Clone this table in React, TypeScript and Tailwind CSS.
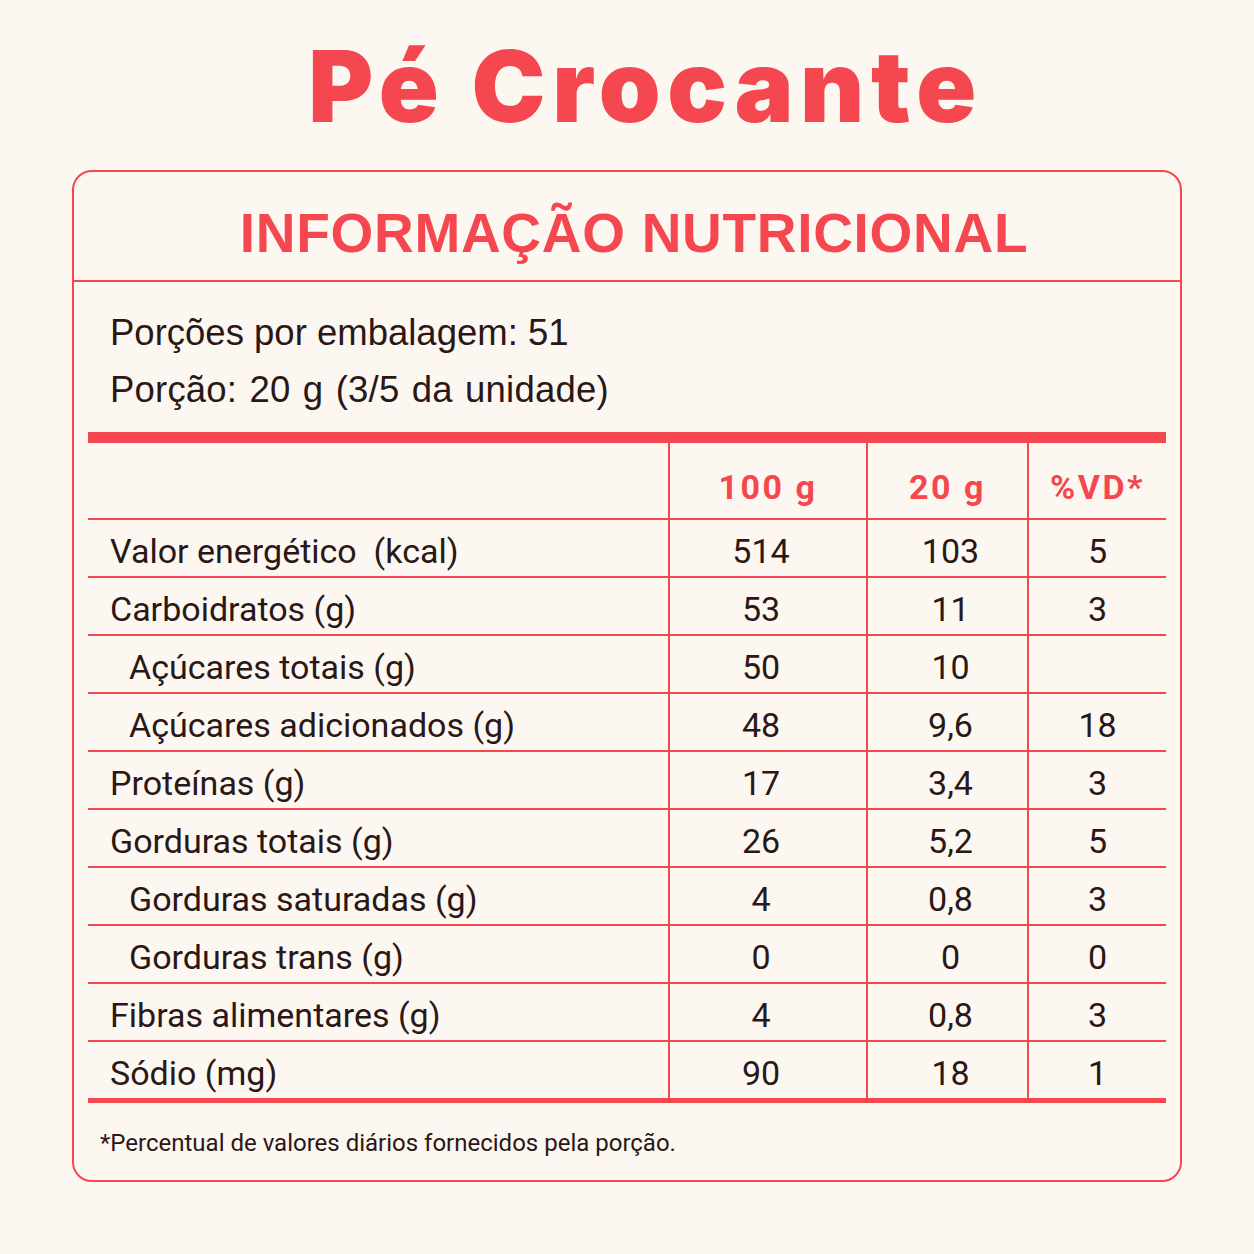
import React from "react";

type Row = { label: string; indent?: boolean; a: string; b: string; c: string };

const rows: Row[] = [
  { label: "Valor energético\u00a0 (kcal)", a: "514", b: "103", c: "5" },
  { label: "Carboidratos (g)", a: "53", b: "11", c: "3" },
  { label: "Açúcares totais (g)", indent: true, a: "50", b: "10", c: "" },
  { label: "Açúcares adicionados (g)", indent: true, a: "48", b: "9,6", c: "18" },
  { label: "Proteínas (g)", a: "17", b: "3,4", c: "3" },
  { label: "Gorduras totais (g)", a: "26", b: "5,2", c: "5" },
  { label: "Gorduras saturadas (g)", indent: true, a: "4", b: "0,8", c: "3" },
  { label: "Gorduras trans (g)", indent: true, a: "0", b: "0", c: "0" },
  { label: "Fibras alimentares (g)", a: "4", b: "0,8", c: "3" },
  { label: "Sódio (mg)", a: "90", b: "18", c: "1" },
];

export default function App() {
  return (
    <div
      className="w-[1254px] h-[1254px] bg-[#fcf8f1] text-[#2a1716] flex flex-col items-center"
      style={{ fontFamily: "Roboto, 'Liberation Sans', sans-serif" }}
    >
      <h1
        className="mt-[30px] ml-[37px] h-[140px] text-[99px] leading-[100px] font-black text-[#f4474f] tracking-[6.6px] pt-[6px]"
        style={{ fontFamily: "Inter, 'Liberation Sans', sans-serif" }}
      >
        Pé Crocante
      </h1>
      <div className="w-[1110px] h-[1012px] border-2 border-[#f4474f] rounded-[20px] flex flex-col">
        <div className="h-[110px] border-b-2 border-[#f4474f] flex items-center justify-center">
          <div
            className="ml-[14px] text-[55px] font-bold text-[#f4474f] leading-none pt-[14px] tracking-[0.7px]"
            style={{ fontFamily: "'Liberation Sans', Arial, sans-serif" }}
          >
            INFORMAÇÃO NUTRICIONAL
          </div>
        </div>
        <div className="px-[14px]">
          <div
            className="pl-[22px] pt-[22px] pb-[14px] text-[36.5px] leading-[57px]"
            style={{ fontFamily: "'Liberation Sans', Arial, sans-serif" }}
          >
            <div>Porções por embalagem: 51</div>
            <div className="[word-spacing:2px] tracking-[0.2px]">Porção: 20 g (3/5 da unidade)</div>
          </div>
          <div className="h-[11px] bg-[#f4474f]" />
          <div className="grid grid-cols-[580px_198px_161px_1fr] text-[34px]">
            <div className="h-[77px] border-b-2 border-[#f4474f]" />
            <div className="h-[77px] border-b-2 border-l-2 border-[#f4474f] flex items-center justify-center pt-[14px] text-[#f4474f] font-bold tracking-[2.5px]">
              100 g
            </div>
            <div className="h-[77px] border-b-2 border-l-2 border-[#f4474f] flex items-center justify-center pt-[14px] text-[#f4474f] font-bold tracking-[2.5px]">
              20 g
            </div>
            <div className="h-[77px] border-b-2 border-l-2 border-[#f4474f] flex items-center justify-center pt-[14px] text-[#f4474f] font-bold tracking-[2.5px]">
              %VD*
            </div>
            {rows.map((r, i) => {
              const last = i === rows.length - 1;
              const h = last ? "h-[56px]" : "h-[58px] border-b-2";
              return (
                <React.Fragment key={r.label}>
                  <div
                    className={`${h} border-[#f4474f] flex items-center pt-[6px] ${
                      r.indent ? "pl-[41px]" : "pl-[22px]"
                    }`}
                  >
                    {r.label}
                  </div>
                  <div className={`${h} border-l-2 border-[#f4474f] flex items-center justify-center pt-[6px] pr-[14px]`}>
                    {r.a}
                  </div>
                  <div className={`${h} border-l-2 border-[#f4474f] flex items-center justify-center pt-[6px] pl-[6px]`}>
                    {r.b}
                  </div>
                  <div className={`${h} border-l-2 border-[#f4474f] flex items-center justify-center pt-[6px]`}>
                    {r.c}
                  </div>
                </React.Fragment>
              );
            })}
          </div>
          <div className="h-[5px] bg-[#f4474f]" />
          <div className="pl-[12px] pt-[25px] text-[24px] leading-[30px]">
            *Percentual de valores diários fornecidos pela porção.
          </div>
        </div>
      </div>
    </div>
  );
}
